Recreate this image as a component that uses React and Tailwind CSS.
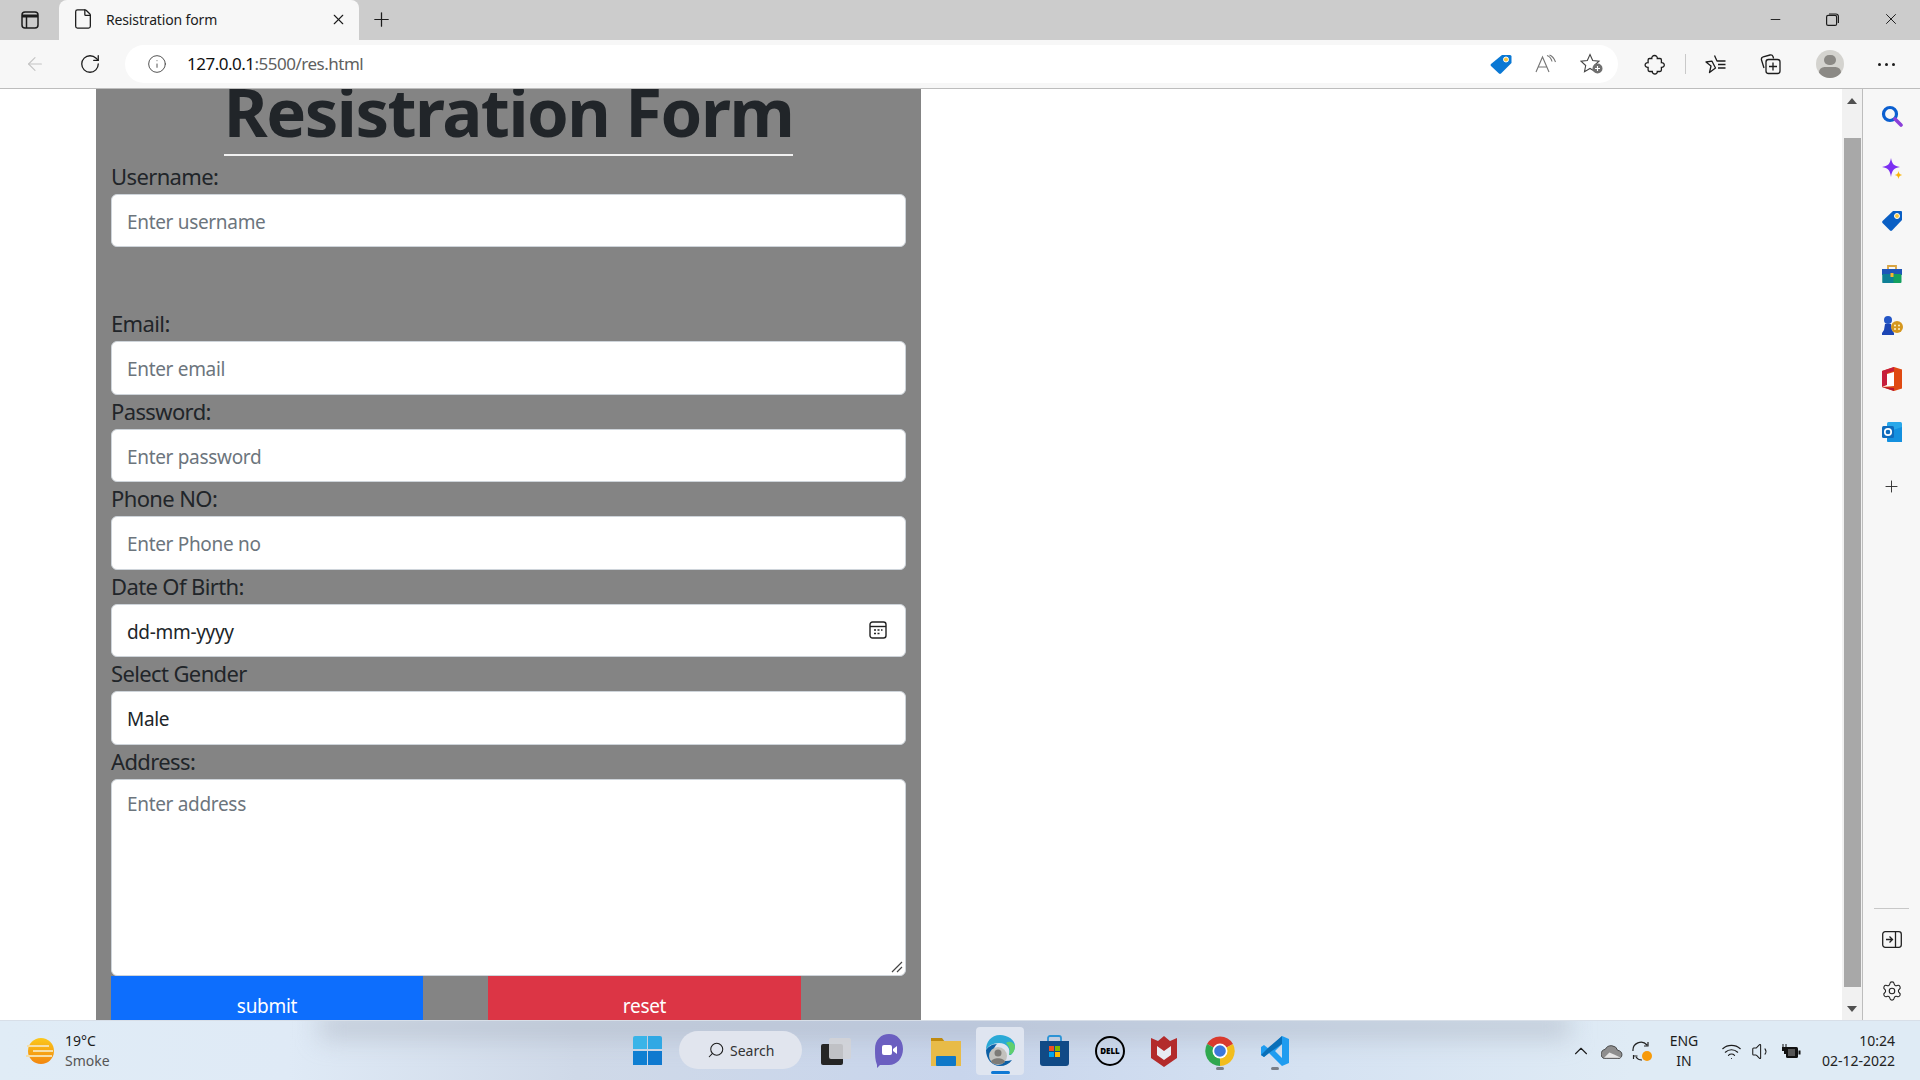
import React from 'react';
import { ArrowLeft, RotateCw, Info, Plus, X, Minus, File, Search, ChevronUp, Wifi, Volume1, Settings } from 'lucide-react';

function Field({ label, placeholder, value, icon, className = '' }) {
  return (
    <div className={className}>
      <div className="h-[34px] text-[22px] leading-[32px] text-[#212529] tracking-[-0.62px]">{label}</div>
      <div className="h-[53.5px] bg-white rounded-[6px] border border-[#ced4da] flex items-center justify-between pl-[15px] pr-[18px] text-[19px] tracking-[-0.32px]">
        <span className={`pt-[3.5px] ${value ? 'text-[#212529]' : 'text-[#6c757d]'}`}>{value || placeholder}</span>
        {icon}
      </div>
    </div>
  );
}

function CalendarIcon() {
  return (
    <svg width="18" height="18" viewBox="0 0 18 18" fill="none" stroke="#222" strokeWidth="1.4">
      <rect x="1" y="1" width="16" height="16" rx="2.5" />
      <path d="M1 5.5h16" />
      <path d="M5 9h2M8.5 9h2M12 9h1.5M5 12.5h2M8.5 12.5h2" strokeWidth="1.6" />
    </svg>
  );
}

function TabStrip() {
  return (
    <div className="h-[40px] bg-[#cccccc] flex items-end shrink-0">
      <div className="w-[59px] h-[40px] flex items-center justify-center">
        <svg width="18" height="18" viewBox="0 0 18 18" fill="none" stroke="#1c1c1c" strokeWidth="1.5">
          <rect x="1" y="1" width="16" height="16" rx="3" />
          <path d="M1 5h16" strokeWidth="3" />
          <path d="M5.5 5v12" />
        </svg>
      </div>
      <div className="w-[300px] h-[40px] bg-[#f7f7f7] rounded-t-[8px] flex items-center pl-[13px] pr-[12px] pb-[2px]">
        <File size={22} strokeWidth={1.4} className="text-[#1c1c1c]" />
        <span className="ml-[12px] text-[14px] tracking-[-0.15px] text-[#1c1c1c] flex-1">Resistration form</span>
        <X size={17} strokeWidth={1.6} className="text-[#1c1c1c]" />
      </div>
      <div className="w-[44px] h-[40px] flex items-center justify-center pb-[2px]">
        <Plus size={23} strokeWidth={1.3} className="text-[#1c1c1c]" />
      </div>
      <div className="flex-1" />
      <div className="h-[40px] flex items-center pr-[20px] gap-[43px] text-[#1c1c1c] pb-[2px]">
        <Minus size={15} strokeWidth={1.5} />
        <svg width="13" height="13" viewBox="0 0 13 13" fill="none" stroke="#1c1c1c" strokeWidth="1.2">
          <rect x="0.6" y="2.4" width="10" height="10" rx="1.5" />
          <path d="M3 1h7a2.4 2.4 0 0 1 2.4 2.4V10" />
        </svg>
        <X size={18} strokeWidth={1.3} />
      </div>
    </div>
  );
}

function Toolbar() {
  return (
    <div className="h-[49px] bg-[#f7f7f7] border-b border-[#bdbdbd] flex items-center shrink-0">
      <div className="w-[125px] flex items-center pl-[24px] gap-[33px]">
        <ArrowLeft size={22} strokeWidth={1.2} className="text-[#c4c4c4]" />
        <RotateCw size={22} strokeWidth={1.4} className="text-[#1c1c1c]" />
      </div>
      <div className="w-[1493px] h-[38px] bg-white rounded-[19px] flex items-center pl-[22px] pr-[14px]">
        <Info size={20} strokeWidth={1.1} className="text-[#444]" />
        <div className="ml-[20px] text-[17px] tracking-[-0.5px] text-[#5f5f5f] flex-1">
          <span className="text-[#111]">127.0.0.1</span>:5500/res.html
        </div>
        <div className="flex items-center gap-[23px]">
          <svg width="22" height="20" viewBox="0 0 22 20">
            <path d="M12 1h8a1.5 1.5 0 0 1 1.5 1.5V9L11 19.5a1.5 1.5 0 0 1-2 0L1 12a1.5 1.5 0 0 1 0-2z" fill="#0a78d4" />
            <circle cx="16" cy="5.5" r="2.5" fill="#f8c63d" stroke="#fff" />
          </svg>
          <svg width="22" height="20" viewBox="0 0 22 20" fill="none" stroke="#757575" strokeWidth="1.1">
            <path d="M1 18L7.5 3 14 18M3.5 13h8" />
            <path d="M12 1.5q4 1.5 5 6M14.5 1q4 1.5 6 7" />
          </svg>
          <svg width="24" height="22" viewBox="0 0 24 22" fill="none" stroke="#444" strokeWidth="1.1">
            <path d="M10 1.5l2.7 6 6.3.7-4.7 4.3 1.2 6.2-5.5-3.2-5.5 3.2 1.2-6.2L1 8.2l6.3-.7z" />
            <circle cx="17.5" cy="15.5" r="5" fill="#6f6f6f" stroke="none" />
            <path d="M15 15.5h5M17.5 13v5" stroke="#fff" />
          </svg>
        </div>
      </div>
      <div className="flex-1 flex items-center pl-[26px] text-[#1c1c1c]">
        <svg width="21" height="21" viewBox="0 0 21 21" fill="none" stroke="#1c1c1c" strokeWidth="1.3">
          <path d="M10.5 1.5c1.8 0 3 1.3 2.8 3h2.7c.8 0 1.4.6 1.4 1.4v2.800c1.600-.2 2.900 1 2.900 2.300s-1.300 2.600-2.900 2.400v2.700c0 .8-.6 1.400-1.400 1.400h-2.700c.2 1.400-1 2.500-2.400 2.500s-2.800-1.100-2.600-2.500H5.500c-.8 0-1.400-.6-1.400-1.400v-2.700c-1.700.2-3-1-3-2.400s1.300-2.500 3-2.300V5.900c0-.8.6-1.400 1.400-1.400h2.300c-.2-1.700 1-3 2.700-3z" />
        </svg>
        <div className="w-px h-[20px] bg-[#c9c9c9] ml-[20px]" />
        <svg className="ml-[19px]" width="22" height="20" viewBox="0 0 22 20" fill="none" stroke="#1c1c1c" strokeWidth="1.3" strokeLinejoin="round">
          <path d="M9.5 1.5L12 7h8.5M13 10.5h7.5M13 14h7.5M10.5 14l-6 4.5L6 12 1 8l6-.8z" />
        </svg>
        <svg className="ml-[33px]" width="21" height="21" viewBox="0 0 21 21" fill="none" stroke="#1c1c1c" strokeWidth="1.3">
          <path d="M4 14L1.5 6a2.5 2.5 0 0 1 1.7-3.100L10 1a2.500 2.500 0 0 1 3 1.500l.6 2" />
          <rect x="6" y="5.5" width="14" height="14" rx="2.5" />
          <path d="M13 8.500v8M9 12.500h8" />
        </svg>
        <div className="ml-[35px] w-[28px] h-[28px] rounded-full bg-[#d4d3cf] overflow-hidden flex flex-col items-center">
          <div className="mt-[5px] w-[12px] h-[12px] rounded-full bg-[#8b8985]" />
          <div className="mt-[2px] w-[22px] h-[14px] rounded-full bg-[#8b8985]" />
        </div>
        <div className="ml-[34px] flex gap-[4px]">
          <div className="w-[3px] h-[3px] rounded-full bg-[#1c1c1c]" />
          <div className="w-[3px] h-[3px] rounded-full bg-[#1c1c1c]" />
          <div className="w-[3px] h-[3px] rounded-full bg-[#1c1c1c]" />
        </div>
      </div>
    </div>
  );
}

function FormPage() {
  return (
    <div className="flex-1 min-w-0 bg-white pl-[96px] overflow-hidden">
      <div className="w-[825px] h-full bg-[#848484] px-[15px] overflow-hidden">
        <div className="h-[67px] flex justify-center">
          <h1 className="h-[67px] border-b-2 border-[#f1f1f1] text-[67px] leading-[45px] font-bold text-[#212529] tracking-[-1.5px] whitespace-nowrap">Resistration Form</h1>
        </div>
        <Field className="mt-[3.5px]" label="Username:" placeholder="Enter username" />
        <Field className="mt-[60px]" label="Email:" placeholder="Enter email" />
        <Field label="Password:" placeholder="Enter password" />
        <Field label="Phone NO:" placeholder="Enter Phone no" />
        <Field label="Date Of Birth:" value="dd-mm-yyyy" icon={<CalendarIcon />} />
        <Field label="Select Gender" value="Male" />
        <div className="h-[34px] text-[22px] leading-[32px] text-[#212529] tracking-[-0.62px]">Address:</div>
        <div className="relative h-[197px] bg-white rounded-[6px] border border-[#ced4da] pl-[15px] pt-[10px] text-[19px] tracking-[-0.32px] text-[#6c757d]">
          Enter address
          <svg className="absolute right-[2px] bottom-[2px]" width="12" height="12" viewBox="0 0 12 12" stroke="#444" strokeWidth="1.2">
            <path d="M1 11L11 1M6 11l5-5" />
          </svg>
        </div>
        <div className="flex gap-[65px] text-white text-[19px] tracking-[-0.3px]">
          <div className="w-[312px] h-[50px] bg-[#0d6efd] flex justify-center pt-[16px]">submit</div>
          <div className="w-[313px] h-[50px] bg-[#dc3545] flex justify-center pt-[16px]">reset</div>
        </div>
      </div>
    </div>
  );
}

function Scrollbar() {
  return (
    <div className="w-[21px] bg-[#f1f1f1] flex flex-col items-center shrink-0 border-r border-[#bdbdbd]">
      <div className="h-[49px] pt-[9px] flex justify-center">
        <div className="w-0 h-0 border-x-[5px] border-x-transparent border-b-[6px] border-b-[#505050]" />
      </div>
      <div className="w-[17px] flex-1 bg-[#a8a8a8]" />
      <div className="h-[33px] pt-[19px] flex justify-center">
        <div className="w-0 h-0 border-x-[5px] border-x-transparent border-t-[6px] border-t-[#505050]" />
      </div>
    </div>
  );
}

function Sidebar() {
  return (
    <div className="w-[57px] bg-[#f7f7f7] shrink-0 flex flex-col items-center pt-[16px] gap-[30.5px]">
      <svg className="h-[22px]" width="22" height="22" viewBox="0 0 22 22" fill="none">
        <circle cx="9" cy="9" r="6.5" stroke="#0b5fd0" strokeWidth="3.2" />
        <path d="M14 14l6 6" stroke="#8b3fd8" strokeWidth="3.6" strokeLinecap="round" />
      </svg>
      <svg className="h-[22px]" width="22" height="22" viewBox="0 0 22 22">
        <path d="M10 0c1 6 3 8 9 9-6 1-8 3-9 10-1-7-3-9-9-10 6-1 8-3 9-9z" fill="#7b2ff2" />
        <path d="M17.5 13c.4 2.5 1.2 3.3 3.8 4-2.6.6-3.4 1.5-3.8 4-.4-2.5-1.2-3.4-3.8-4 2.6-.7 3.4-1.500 3.800-4z" fill="#f9b50b" />
      </svg>
      <svg className="h-[22px]" width="22" height="22" viewBox="0 0 22 22">
        <path d="M12 1h8a1 1 0 0 1 1 1v8L11 20.5a1.5 1.5 0 0 1-2 0L1.5 13a1.5 1.5 0 0 1 0-2z" fill="#0a5fc4" />
        <circle cx="16" cy="6" r="2.5" fill="#f8c63d" stroke="#fff" />
      </svg>
      <svg className="h-[22px]" width="22" height="22" viewBox="0 0 22 22">
        <path d="M7 6V3h8v3" fill="none" stroke="#d9a441" strokeWidth="1.8" />
        <rect x="1" y="6" width="20" height="6" fill="#1e56b8" />
        <rect x="1.5" y="11" width="19" height="9" rx="1" fill="#13a05f" />
        <rect x="1.5" y="11" width="11" height="9" fill="#0e7f96" />
        <rect x="9.5" y="10" width="3" height="4" fill="#f5b82e" />
      </svg>
      <svg className="h-[22px]" width="22" height="22" viewBox="0 0 22 22">
        <circle cx="7" cy="5" r="4" fill="#2456c6" />
        <path d="M4 9h6l1 6 2 3v2H1v-2l2-3z" fill="#1c45b4" />
        <circle cx="16" cy="12" r="6" fill="#d5971f" />
        <circle cx="14" cy="10.5" r="1" fill="#fff2c9" />
        <circle cx="18" cy="10.5" r="1" fill="#fff2c9" />
        <circle cx="14" cy="14" r="1" fill="#fff2c9" />
        <circle cx="18" cy="14" r="1" fill="#fff2c9" />
      </svg>
      <svg className="h-[24px] -mt-[1px]" width="20" height="24" viewBox="0 0 20 24">
        <path d="M12 0l8 2.5v19L12 24 0 20V4z" fill="#e04a12" />
        <path d="M12 0L0 4v16l5-2V6l7-2z" fill="#c71f3c" />
        <path d="M5 7l7-2v14l-12 1 5-2z" fill="#fff" />
        <path d="M12 4v20l-12-4 12 1z" fill="#b8162e" />
      </svg>
      <svg className="h-[22px]" width="22" height="22" viewBox="0 0 22 22">
        <rect x="6" y="1" width="15" height="20" rx="1.5" fill="#29a8ea" />
        <path d="M6 11l15-5v15H7.5A1.5 1.5 0 0 1 6 19.5z" fill="#1490df" />
        <rect x="1" y="5" width="12" height="12" rx="1.5" fill="#0f6cbd" />
        <circle cx="7" cy="11" r="3.2" fill="none" stroke="#fff" strokeWidth="1.7" />
      </svg>
      <Plus className="mt-[3px]" size={19} strokeWidth={1.2} color="#333" />
      <div className="flex-1" />
      <div className="w-[35px] h-px bg-[#c8c8c8]" />
      <svg className="-mt-[9px]" width="20" height="17" viewBox="0 0 20 17" fill="none" stroke="#222" strokeWidth="1.3">
        <rect x="0.7" y="0.7" width="18.6" height="15.6" rx="2.5" />
        <path d="M13.5 1v15M4 8.5h6M7.5 5.5l3 3-3 3" />
      </svg>
      <Settings className="mt-[2px] mb-[18px]" size={22} strokeWidth={1.2} color="#222" />
    </div>
  );
}

function Taskbar() {
  return (
    <div className="relative h-[60px] shrink-0 overflow-hidden bg-[linear-gradient(90deg,#e0ecf6_0%,#dfeaf6_15%,#cfd9e8_30%,#c8d5ec_50%,#d5e2f2_68%,#dfebf5_85%,#dfebf5_100%)] border-t border-[#d8dfe8] flex items-center text-[#1c1c1c]">
      <div className="absolute left-[320px] -top-[8px] w-[1250px] h-[26px] bg-[#a8b0be]/50 blur-[12px]" />
      <div className="relative w-[26px] h-[26px] ml-[28px] rounded-full bg-[linear-gradient(180deg,#fbc81c,#f2860f)] flex flex-col justify-center gap-[3px]">
        <div className="h-[2px] w-[22px] -ml-[1px] bg-[#f6dfa8]" />
        <div className="h-[2px] w-[20px] ml-[5px] bg-[#f6dfa8]" />
        <div className="h-[2px] w-[26px] -ml-[2px] bg-[#f6dfa8]" />
      </div>
      <div className="relative ml-[11px] text-[14px] leading-[20px]">
        <div>19°C</div>
        <div className="text-[#555]">Smoke</div>
      </div>

      <div className="absolute left-[633px] top-0 h-[60px] flex items-center">
        <div className="grid grid-cols-2 gap-[1.5px] w-[29px] h-[29px] -mt-[2px]">
          <div className="bg-[#3ab4e8] rounded-tl-[2px]" />
          <div className="bg-[#30a8e4] rounded-tr-[2px]" />
          <div className="bg-[#0f7fd2]" />
          <div className="bg-[#0f79cf]" />
        </div>
        <div className="ml-[17px] w-[123px] h-[38px] rounded-[19px] bg-[#e1e5ee] flex items-center pl-[28px] -mt-[2px]">
          <Search size={18} strokeWidth={1.4} className="-scale-x-100" />
          <span className="ml-[5px] text-[14px] text-[#333]">Search</span>
        </div>
        <div className="relative ml-[19px] w-[24px] h-[27px]">
          <div className="absolute left-0 bottom-0 w-[22px] h-[21px] rounded-[2px] bg-[#252525]" />
          <div className="absolute left-[8px] top-0 w-[22px] h-[21px] rounded-[2px] bg-[#d2d3d7]/90" />
        </div>
        <svg className="ml-[30px]" width="28" height="36" viewBox="0 0 28 36">
          <path d="M14 1c8 0 14 6 14 15s-6 16-14 16H5l-3 3v-3c-2-5-2-10-2-16C0 7 6 1 14 1z" fill="#6b5fc0" />
          <rect x="7" y="12" width="10" height="10" rx="2" fill="#fff" />
          <path d="M18 16l4-3v8l-4-3z" fill="#fff" />
        </svg>
        <svg className="ml-[28px]" width="30" height="30" viewBox="0 0 30 30">
          <path d="M0 2h11l3 4h-14z" fill="#c08a0e" />
          <rect y="5" width="30" height="25" fill="#e8bb48" />
          <rect x="5" y="20" width="20" height="10" rx="1" fill="#0e78c8" />
        </svg>
        <div className="ml-[15px] w-[48px] h-[48px] rounded-[4px] bg-[#dfe5f0] relative flex items-center justify-center">
          <svg width="30" height="32" viewBox="0 0 30 32">
            <path d="M15 0C6 0 1 7 1 15c2-4 7-7 13-7 8 0 12 6 10 12h2c3-3 4-7 4-9C30 5 23 0 15 0z" fill="#2aa9d6" />
            <path d="M30 11c0 5-3 9-6 9 2-5 0-9-3-12 4-3 8 0 9 3z" fill="#5fcf6d" />
            <path d="M1 15c0 9 6 16 14 16 5 0 9-2 12-6-7 2-16 1-18-7-1-4 1-7 3-9-5 0-9 3-11 6z" fill="#0b5fa5" />
            <circle cx="13" cy="21" r="9" fill="#c2c1bd" />
            <circle cx="13" cy="18" r="3.5" fill="#7d7b77" />
            <path d="M6 27c1-5 13-5 14 0-3 3-11 3-14 0z" fill="#7d7b77" />
          </svg>
          <div className="absolute bottom-[1px] w-[19px] h-[3px] rounded-full bg-[#0f78d4]" />
        </div>
        <svg className="ml-[16px]" width="29" height="32" viewBox="0 0 29 32">
          <path d="M8 7V3a2 2 0 0 1 2-2h9a2 2 0 0 1 2 2v4" fill="none" stroke="#2c93d5" strokeWidth="1.8" />
          <path d="M0 6h29v22a3 3 0 0 1-3 3H3a3 3 0 0 1-3-3z" fill="#114a86" />
          <rect x="9" y="11" width="5" height="5" fill="#f25022" />
          <rect x="15" y="11" width="5" height="5" fill="#7fba00" />
          <rect x="9" y="17" width="5" height="5" fill="#00a4ef" />
          <rect x="15" y="17" width="5" height="5" fill="#ffb900" />
        </svg>
        <div className="ml-[26px] w-[30px] h-[30px] rounded-full border-2 border-black flex items-center justify-center text-[8px] font-black text-black">DELL</div>
        <svg className="ml-[26px]" width="26" height="32" viewBox="0 0 26 32">
          <path d="M0 3l7 3 6-5 6 5 7-3v20L13 32 0 23z" fill="#b32b2b" />
          <path d="M6 11l7 5 7-5v9l-7 5-7-5z" fill="#e8ecf4" />
        </svg>
        <div className="relative ml-[28px]">
          <svg width="30" height="30" viewBox="0 0 30 30">
            <path d="M15 15L2 8a15 15 0 0 1 26 0z" fill="#d93a2e" />
            <path d="M15 15L28 8a15 15 0 0 1-13 22z" fill="#f2bd1d" />
            <path d="M15 15v15A15 15 0 0 1 2 8z" fill="#2fa84f" />
            <circle cx="15" cy="15" r="7.5" fill="#fff" />
            <circle cx="15" cy="15" r="5.8" fill="#3d78db" />
          </svg>
          <div className="absolute -bottom-[4px] left-[11px] w-[8px] h-[3px] rounded-full bg-[#7a7f88]" />
        </div>
        <div className="relative ml-[26px]">
          <svg width="28" height="30" viewBox="0 0 28 30">
            <path d="M21 0l7 3v24l-7 3L8 17l-5 4-3-2v-8l3-2 5 4zM21 8l-7 7 7 7z" fill="#1f9cf0" />
            <path d="M21 0v8l-13 9-5 4-3-2 8-8z" fill="#0a6fb8" />
          </svg>
          <div className="absolute -bottom-[4px] left-[10px] w-[8px] h-[3px] rounded-full bg-[#7a7f88]" />
        </div>
      </div>

      <div className="absolute right-[25px] top-0 h-[60px] flex items-center">
        <ChevronUp size={22} strokeWidth={1.2} />
        <svg className="ml-[9px]" width="22" height="15" viewBox="0 0 21 14">
          <path d="M5 14a4.5 4.5 0 0 1-1-9 6.5 6.5 0 0 1 12 1 4 4 0 0 1 0 8z" fill="#8e8e8e" stroke="#333" strokeWidth="0.8" />
          <path d="M3 13l5-5 5 2 6 3z" fill="#e6e6e6" />
        </svg>
        <svg className="ml-[9px]" width="21" height="21" viewBox="0 0 21 21" fill="none" stroke="#222" strokeWidth="1.2">
          <path d="M1 10a8 8 0 0 1 14-6M16 1v4h-4" />
          <path d="M1.5 14v4M1.5 15h4M4 16a7 7 0 0 0 6 3" />
          <circle cx="15" cy="15" r="5" fill="#f79a0a" stroke="none" />
        </svg>
        <div className="ml-[15px] w-[32px] text-center text-[14px] leading-[20px]">ENG<br />IN</div>
        <Wifi className="ml-[21px]" size={21} strokeWidth={1.3} />
        <Volume1 className="ml-[9px]" size={21} strokeWidth={1.2} />
        <svg className="ml-[9px]" width="20" height="15" viewBox="0 0 20 15">
          <path d="M1.5 0h1v3h2V0h1v3H7v4H5v3H3V7H1V3h.5z" fill="#111" />
          <rect x="5" y="3" width="12" height="11" rx="1.5" fill="#111" />
          <rect x="7" y="5" width="7" height="7" fill="#555" />
          <rect x="17.5" y="6.5" width="2" height="4" fill="#111" />
        </svg>
        <div className="ml-[20px] w-[74px] text-right text-[14px] leading-[20px] text-[#222] whitespace-nowrap">10:24<br />02-12-2022</div>
      </div>
    </div>
  );
}

export default function App() {
  return (
    <div className={`h-screen flex flex-col overflow-hidden font-["Noto_Sans",sans-serif]`}>
      <TabStrip />
      <Toolbar />
      <div className="flex-1 min-h-0 flex">
        <FormPage />
        <Scrollbar />
        <Sidebar />
      </div>
      <Taskbar />
    </div>
  );
}
